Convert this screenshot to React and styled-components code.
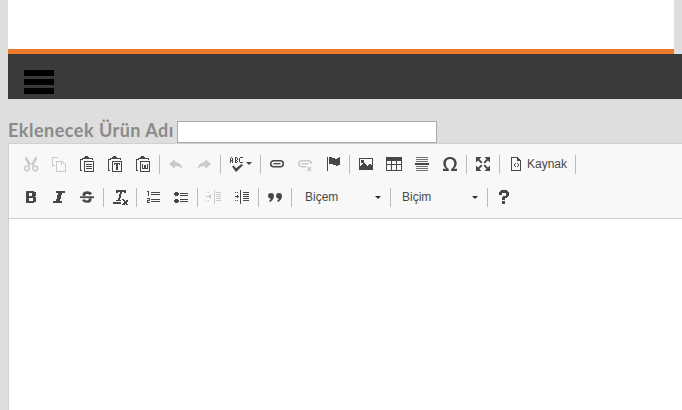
import React from "react";
import styled, { createGlobalStyle } from "styled-components";

const GlobalStyle = createGlobalStyle`
  html, body {
    margin: 0;
    height: 410px;
    overflow: hidden;
    background: #dedede;
    font-family: "Liberation Sans", Arial, sans-serif;
  }
`;

const Page = styled.div`
  padding-left: 8px;
  height: 410px;
  overflow: hidden;
`;

const Banner = styled.div`
  width: 666px;
  height: 49px;
  background: #fff;
`;

const Stripe = styled.div`
  width: 666px;
  height: 5px;
  background: #ed7a2a;
`;

const NavBar = styled.div`
  height: 45px;
  box-sizing: border-box;
  padding: 16px 0 0 16px;
  background: #3a3a3a;
`;

const Burger = styled.div`
  display: flex;
  flex-direction: column;
  gap: 3px;
  & span {
    display: block;
    width: 30px;
    height: 6px;
    background: #000;
  }
`;

const NameRow = styled.div`
  display: flex;
  align-items: flex-end;
  height: 44px;
`;

const NameLabel = styled.label`
  font-family: Lato, sans-serif;
  font-weight: 700;
  font-size: 18px;
  line-height: 22px;
  color: #8a8a8a;
  width: 169px;
  padding-bottom: 2px;
  white-space: nowrap;
  letter-spacing: 0.5px;
`;

const NameInput = styled.input`
  box-sizing: border-box;
  width: 260px;
  height: 22px;
  margin: 0;
  padding: 1px 2px;
  background: #fff;
  border: 1px solid #a9a9a9;
  border-radius: 0;
  outline: none;
`;

const Editor = styled.div`
  height: 267px;
  background: #fff;
  border: 1px solid #d1d1d1;
  border-right: 0;
`;

const Toolbar = styled.div`
  height: 75px;
  box-sizing: border-box;
  padding: 6px 0 0 8px;
  background: #f8f8f8;
  border-bottom: 1px solid #d1d1d1;
  display: flex;
  flex-direction: column;
  gap: 5px;
`;

const ToolRow = styled.div`
  display: flex;
  align-items: center;
  height: 28px;
`;

const ToolButton = styled.span`
  width: ${(p) => p.$width || 28}px;
  height: 28px;
  flex: none;
  display: flex;
  align-items: center;
  justify-content: center;
  color: ${(p) => (p.$off ? "#cacaca" : "#474747")};
`;

const Separator = styled.span`
  flex: none;
  width: 1px;
  height: 19px;
  margin: 0 2px;
  background: #bcbcbc;
`;

const SourceButton = styled.span`
  flex: none;
  display: flex;
  align-items: center;
  width: 71px;
  height: 28px;
  padding-left: 6px;
  box-sizing: border-box;
  color: #474747;
  font-size: 12px;
`;

const SourceLabel = styled.span`
  margin-left: 3px;
  color: #484848;
`;

const Combo = styled.span`
  flex: none;
  width: ${(p) => p.$width}px;
  height: 28px;
  box-sizing: border-box;
  padding-left: ${(p) => p.$inset}px;
  position: relative;
  display: flex;
  align-items: center;
  font-size: 12px;
  color: #484848;
  &::after {
    content: "";
    position: absolute;
    right: 7px;
    top: 13px;
    border: 3px solid transparent;
    border-top-color: #2f2f2f;
    border-bottom: 0;
  }
`;

const Glyph = ({ children }) => (
  <svg width="16" height="16" viewBox="0 0 16 16" fill="currentColor" shapeRendering="crispEdges">
    {children}
  </svg>
);

const ClipBase = () => (
  <path d="M3 4V2h2V1h1V0h3v1h1v1h2v1H4v1zM1 3h2v1H2v10h1v1H1zM12 2h2v2h-1V3h-1z" />
);

const Cut = () => (
  <Glyph>
    <g shapeRendering="auto">
      <path d="M3 0l5 8 5-8 1 3-4 7.500 .5 1-2.500-3.500-2.500 3.500 .5-1L2 3z" />
      <path d="M3.800 10a2.400 2.400 0 1 0 .1 0zM12.200 10a2.400 2.400 0 1 0 .1 0z" fill="none" stroke="currentColor" strokeWidth="1.700" />
    </g>
  </Glyph>
);
const Copy = () => (
  <Glyph>
    <path d="M1 1h5v1H2v7h2v1H1zM6 1h1v1H6zM5 5h6v1H6v9h8V9h1v7H5zM11 5h1v1h1v1h1v1h1v1h-5V5z" />
    <path d="M11 6h1v2h2v1h-3z" fill="#f8f8f8" />
  </Glyph>
);
const Paste = () => (
  <Glyph>
    <ClipBase />
    <path d="M5 5h10v11H5zM6 6v9h8V6z" />
    <path d="M7 8h6v1H7zM7 10h6v1H7zM7 12h6v1H7z" />
  </Glyph>
);
const PasteText = () => (
  <Glyph>
    <ClipBase />
    <path d="M5 5h10v11H5zM6 6v9h8V6z" />
    <path d="M7 7h6v2h-1V8h-1v6h-2V8H8v1H7z" />
  </Glyph>
);
const PasteWord = () => (
  <Glyph>
    <ClipBase />
    <path d="M5 5h10v11H5zM6 6v9h8V6z" />
    <path d="M7 8h1v4h1V9h2v3h1V8h1v5H7z" />
  </Glyph>
);
const Undo = () => (
  <Glyph>
    <g shapeRendering="auto">
      <path d="M7 3L1 8l6 5V10c3.400 0 5.600.8 7.600 3C14 8.800 11 6.400 7 6z" />
    </g>
  </Glyph>
);
const Redo = () => (
  <Glyph>
    <g shapeRendering="auto">
      <path d="M9 3l6 5-6 5V10c-3.400 0-5.600.8-7.600 3C2 8.800 5 6.400 9 6z" />
    </g>
  </Glyph>
);
const Spell = () => (
  <Glyph>
    <path d="M1 7V2h1V1h1v1h1v5H3V5H2v2zM2 2v2h1V2zM6 1h2v1h1v2H8v1h1v1H8v1H6V1zM7 2v2h1V2zM7 5v1h1V5zM11 2V1h3v1h-3v4h3v1h-3V6h-1V2z" />
    <g shapeRendering="auto">
      <path d="M3 10.500l1.800-1 2.200 2.700 5.500-4.200 1.500 1.300L7 16z" />
    </g>
  </Glyph>
);
const Link = () => (
  <Glyph>
    <g shapeRendering="auto" fill="none" stroke="currentColor">
      <rect x="1.700" y="4.700" width="12.600" height="6" rx="3" strokeWidth="1.500" />
      <path d="M4.500 7.700h7" strokeWidth="1.300" />
    </g>
  </Glyph>
);
const Unlink = () => (
  <Glyph>
    <g shapeRendering="auto" fill="none" stroke="currentColor" strokeWidth="1.500">
      <path d="M9 10.700H4.700a3 3 0 0 1 0-6h6.600a3 3 0 0 1 3 3" />
      <path d="M4.500 7.700h7M10.500 11l3.600 4M14.100 11l-3.600 4" />
    </g>
  </Glyph>
);
const Anchor = () => (
  <Glyph>
    <path d="M2 1h1v14H2zM4 1h3v1h3v1h2V2h2V1h1v8h-2v1h-2V9H8V8H4z" />
  </Glyph>
);
const Picture = () => (
  <Glyph>
    <path d="M1 2h14v12H1zM2 3v7l3-3h1l3 3 2-2h1l2 2V3zM3 4h3v3H3z" fillRule="evenodd" />
  </Glyph>
);
const Table = () => (
  <Glyph>
    <path d="M0 1h16v14H0zM1 5v3h4V5zM6 5v3h4V5zM11 5v3h4V5zM1 9v5h4V9zM6 9v5h4V9zM11 9v5h4V9z" fillRule="evenodd" />
  </Glyph>
);
const Rule = () => (
  <Glyph>
    <path d="M2 1h12v1H2zM2 3h12v1H2zM2 5h12v1H2z" opacity="0.75" />
    <path d="M1 7h14v2H1z" />
    <path d="M2 10h12v1H2zM2 12h12v1H2zM2 14h12v1H2z" opacity="0.75" />
  </Glyph>
);
const Omega = () => (
  <Glyph>
    <g shapeRendering="auto">
      <path d="M1 15v-2.200h3.300C2.500 11.400 1.300 9.500 1.300 7.200 1.300 3.500 4.200 1 8 1s6.700 2.500 6.700 6.200c0 2.300-1.200 4.200-3 5.600H15V15H9.200v-2c1.800-1 3-3 3-5.500 0-2.600-1.700-4.400-4.200-4.400S3.800 4.900 3.800 7.500c0 2.500 1.200 4.500 3 5.500v2z" />
    </g>
  </Glyph>
);
const Maximize = () => (
  <Glyph>
    <g shapeRendering="auto">
      <path d="M1 1h5.500L1 6.500zM15 1H9.500L15 6.500zM1 15h5.500L1 9.500zM15 15H9.500L15 9.500z" />
      <path d="M3 3l3.800 3.800M13 3L9.200 6.800M3 13l3.800-3.800M13 13L9.200 9.200" fill="none" stroke="currentColor" strokeWidth="1.800" />
    </g>
  </Glyph>
);
const Source = () => (
  <Glyph>
    <path d="M3 1h7v1h1v1h1v1h1v11H3zM4 2v12h8V5H9V2z" fillRule="evenodd" />
    <path d="M7 7h1v1H7zM6 8h1v2H6zM7 10h1v1H7zM9 7h1v1H9zM10 8h1v2h-1zM9 10h1v1H9z" />
  </Glyph>
);
const Bold = () => (
  <Glyph>
    <path d="M3 2h8v1h2v4h-1v1h1v5h-2v1H3zM6 4v3h3V4zM6 9v3h4V9z" fillRule="evenodd" />
  </Glyph>
);
const Italic = () => (
  <Glyph>
    <path d="M5 2h9v2h-3L9 12h2v2H2v-2h3L7 4H5z" />
  </Glyph>
);
const Strike = () => (
  <Glyph>
    <g shapeRendering="auto">
      <path d="M13 4.500c-1-1.500-2.800-2.300-5-2.300-2.600 0-4.500 1.300-4.500 3.300 0 .6.100 1.100.4 1.500h2.700C5.900 6.600 6 5.200 8 5c1.200 0 2 .5 2.600 1.300z" />
      <path d="M1 7.300h14v1.800H1z" />
      <path d="M3 11.300c1 1.700 2.800 2.500 5 2.500 2.700 0 4.600-1.300 4.600-3.400 0-.5-.1-.9-.2-1.200H9.700c.4.900.1 2-1.700 2.200-1.300 0-2.200-.6-2.700-1.500z" />
    </g>
  </Glyph>
);
const ClearFormat = () => (
  <Glyph>
    <path d="M4 1h10v3h-2V3h-2L8 11h1v1H4v-1h2L8 3H6v1H4zM1 13h8v2H1z" />
    <path d="M10 10h2v1h1v1h1v-1h2v1l-1 1-1 1 1 1 1 1H14l-1-1-1 1h-2v-1l2-2-2-2z" />
  </Glyph>
);
const OrderedList = () => (
  <Glyph>
    <path d="M2 2h2v5H3V3H2zM6 3h9v1H6zM6 5h9v1H6z" />
    <path d="M2 9h3v3H3v1h2v1H2v-3h2v-1H2zM6 10h9v1H6zM6 12h9v1H6z" />
  </Glyph>
);
const BulletList = () => (
  <Glyph>
    <path d="M2 3h3v1h1v2H5v1H2V6H1V4h1zM2 10h3v1h1v2H5v1H2v-1H1v-2h1zM7 4h8v1H7zM7 6h8v1H7zM7 10h8v1H7zM7 12h8v1H7z" />
  </Glyph>
);
const Outdent = () => (
  <Glyph>
    <path d="M8 1h1v14H8zM10 3h5v1h-5zM10 5h5v1h-5zM10 7h5v1h-5zM10 9h5v1h-5zM10 11h5v1h-5zM4 5h1v5H4zM3 6h1v3H3zM2 7h1v1H2zM0 7h2v1H0zM0 3h1v1H0zM2 3h1v1H2zM0 11h1v1H0zM2 11h1v1H2z" />
  </Glyph>
);
const Indent = () => (
  <Glyph>
    <path d="M6 1h1v14H6zM9 3h6v1H9zM9 5h6v1H9zM9 7h6v1H9zM9 9h6v1H9zM9 11h6v1H9zM3 6h1v1H3zM4 7h1v1H4zM3 8h1v1H3zM1 7h3v1H1zM1 3h1v1H1zM3 3h1v1H3zM1 11h1v1H1zM3 11h1v1H3z" />
  </Glyph>
);
const Quote = () => (
  <Glyph>
    <g shapeRendering="auto">
      <path d="M1 7a3 3 0 1 1 6 0c0 3-2 5-4 6l-1-1c1-.7 1.600-1.500 1.800-2.200A3 3 0 0 1 1 7zM9 7a3 3 0 1 1 6 0c0 3-2 5-4 6l-1-1c1-.7 1.600-1.500 1.800-2.200A3 3 0 0 1 9 7z" />
    </g>
  </Glyph>
);
const Help = () => (
  <Glyph>
    <path d="M3 3h1V2h1V1h6v1h1v1h1v4h-1v1h-1v1H9v2H6V8h1V7h3V4H6v2H3zM6 12h3v3H6z" />
  </Glyph>
);

const Sep = () => <Separator />;
const B = ({ icon: Icon, off }) => (
  <ToolButton $off={off}>
    <Icon />
  </ToolButton>
);

export default function App() {
  return (
    <Page>
      <GlobalStyle />
      <Banner />
      <Stripe />
      <NavBar>
        <Burger>
          <span />
          <span />
          <span />
        </Burger>
      </NavBar>
      <NameRow>
        <NameLabel>Eklenecek Ürün Adı</NameLabel>
        <NameInput type="text" />
      </NameRow>
      <Editor>
        <Toolbar>
          <ToolRow>
            <B icon={Cut} off />
            <B icon={Copy} off />
            <B icon={Paste} />
            <B icon={PasteText} />
            <B icon={PasteWord} />
            <Sep />
            <B icon={Undo} off />
            <B icon={Redo} off />
            <Sep />
            <ToolButton $width={35}>
              <Spell />
              <svg width="6" height="4" viewBox="0 0 6 4" fill="currentColor" style={{ marginLeft: 1 }}>
                <path d="M0 0h6L3 3z" />
              </svg>
            </ToolButton>
            <Sep />
            <B icon={Link} />
            <B icon={Unlink} off />
            <B icon={Anchor} />
            <Sep />
            <B icon={Picture} />
            <B icon={Table} />
            <B icon={Rule} />
            <B icon={Omega} />
            <Sep />
            <B icon={Maximize} />
            <Sep />
            <SourceButton>
              <Source />
              <SourceLabel>Kaynak</SourceLabel>
            </SourceButton>
            <Sep />
          </ToolRow>
          <ToolRow>
            <B icon={Bold} />
            <B icon={Italic} />
            <B icon={Strike} />
            <Sep />
            <B icon={ClearFormat} />
            <Sep />
            <B icon={OrderedList} />
            <B icon={BulletList} />
            <Sep />
            <B icon={Outdent} off />
            <B icon={Indent} />
            <Sep />
            <B icon={Quote} />
            <Sep />
            <Combo $width={94} $inset={11}>Biçem</Combo>
            <Sep />
            <Combo $width={92} $inset={9}>Biçim</Combo>
            <Sep />
            <B icon={Help} />
          </ToolRow>
        </Toolbar>
      </Editor>
    </Page>
  );
}
